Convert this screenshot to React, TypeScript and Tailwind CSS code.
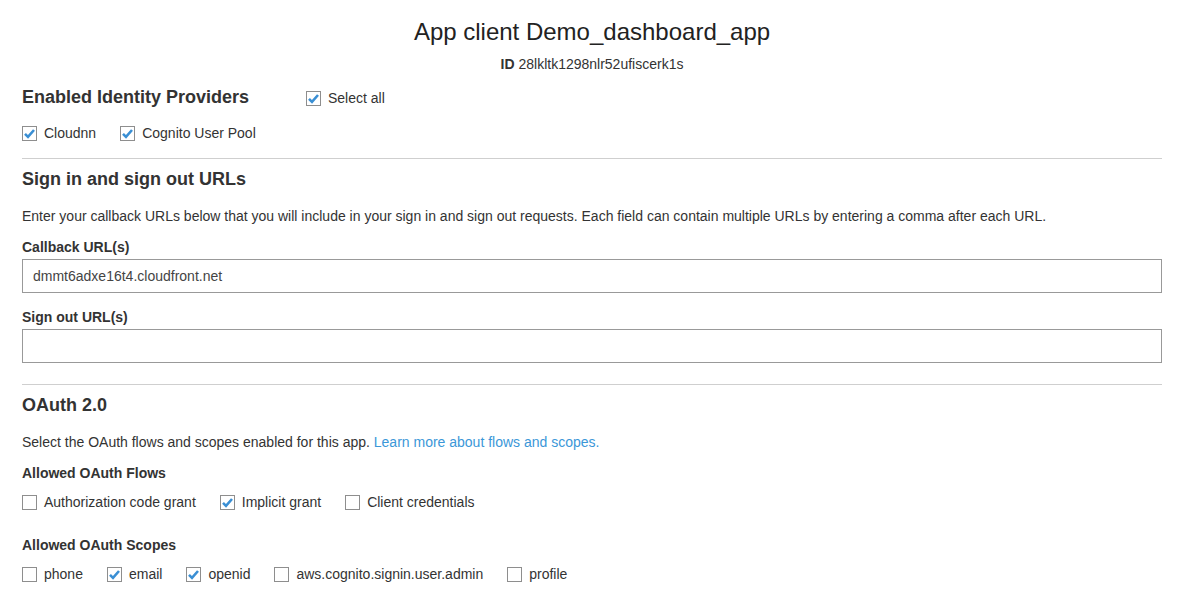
import React from "react";

function Check({ checked }: { checked?: boolean }) {
  return (
    <span className="w-[15px] h-[15px] border border-[#8e8e8e] bg-white flex items-center justify-center shrink-0">
      {checked && (
        <svg width="13" height="13" viewBox="0 0 13 13">
          <path d="M2 6.8 L5 9.8 L11 3" fill="none" stroke="#3a8fd4" strokeWidth="2.6" strokeLinejoin="miter" />
        </svg>
      )}
    </span>
  );
}

function Option({ label, checked }: { label: string; checked?: boolean }) {
  return (
    <label className="flex items-center gap-[7px] mr-[24px] h-[20px]">
      <Check checked={checked} />
      <span>{label}</span>
    </label>
  );
}

export default function App() {
  return (
    <div
      className="w-[1180px] h-[601px] bg-white text-[#333] text-[14px] overflow-hidden"
      style={{ fontFamily: '"Liberation Sans", Arial, sans-serif' }}
    >
      <div className="pl-[22px] w-[1162px]">
        {/* Header */}
        <div className="text-center">
          <h1 className="pt-[17px] text-[24px] leading-[30px] text-[#222]">App client Demo_dashboard_app</h1>
          <div className="mt-[7px] leading-[20px] text-[#333]">
            <b>ID</b> 28lkltk1298nlr52ufiscerk1s
          </div>
        </div>

        {/* Identity providers */}
        <div className="mt-[11px] flex items-center">
          <h2 className="w-[284px] text-[18px] leading-[24px] font-bold">Enabled Identity Providers</h2>
          <div className="mt-[2px]">
            <Option label="Select all" checked />
          </div>
        </div>
        <div className="mt-[14px] flex">
          <Option label="Cloudnn" checked />
          <Option label="Cognito User Pool" checked />
        </div>

        <div className="mt-[15px] border-t border-[#cfcfcf]" />

        {/* Sign in / out */}
        <h2 className="mt-[8px] text-[18px] leading-[24px] font-bold">Sign in and sign out URLs</h2>
        <p className="mt-[15px] leading-[20px]">
          Enter your callback URLs below that you will include in your sign in and sign out requests. Each field can contain multiple URLs by entering a comma after each URL.
        </p>
        <div className="mt-[11px] leading-[20px] font-bold">Callback URL(s)</div>
        <div className="mt-[2px] h-[34px] border border-[#999] px-[10px] flex items-center text-[#444]">
          dmmt6adxe16t4.cloudfront.net
        </div>
        <div className="mt-[14px] leading-[20px] font-bold">Sign out URL(s)</div>
        <div className="mt-[2px] h-[34px] border border-[#999]" />

        <div className="mt-[21px] border-t border-[#cfcfcf]" />

        {/* OAuth */}
        <h2 className="mt-[8px] text-[18px] leading-[24px] font-bold">OAuth 2.0</h2>
        <p className="mt-[15px] leading-[20px]">
          Select the OAuth flows and scopes enabled for this app.{" "}
          <a className="text-[#3b97d8]">Learn more about flows and scopes.</a>
        </p>
        <div className="mt-[11px] leading-[20px] font-bold">Allowed OAuth Flows</div>
        <div className="mt-[9px] flex">
          <Option label="Authorization code grant" />
          <Option label="Implicit grant" checked />
          <Option label="Client credentials" />
        </div>
        <div className="mt-[23px] leading-[20px] font-bold">Allowed OAuth Scopes</div>
        <div className="mt-[9px] flex">
          <Option label="phone" />
          <Option label="email" checked />
          <Option label="openid" checked />
          <Option label="aws.cognito.signin.user.admin" />
          <Option label="profile" />
        </div>
      </div>
    </div>
  );
}
